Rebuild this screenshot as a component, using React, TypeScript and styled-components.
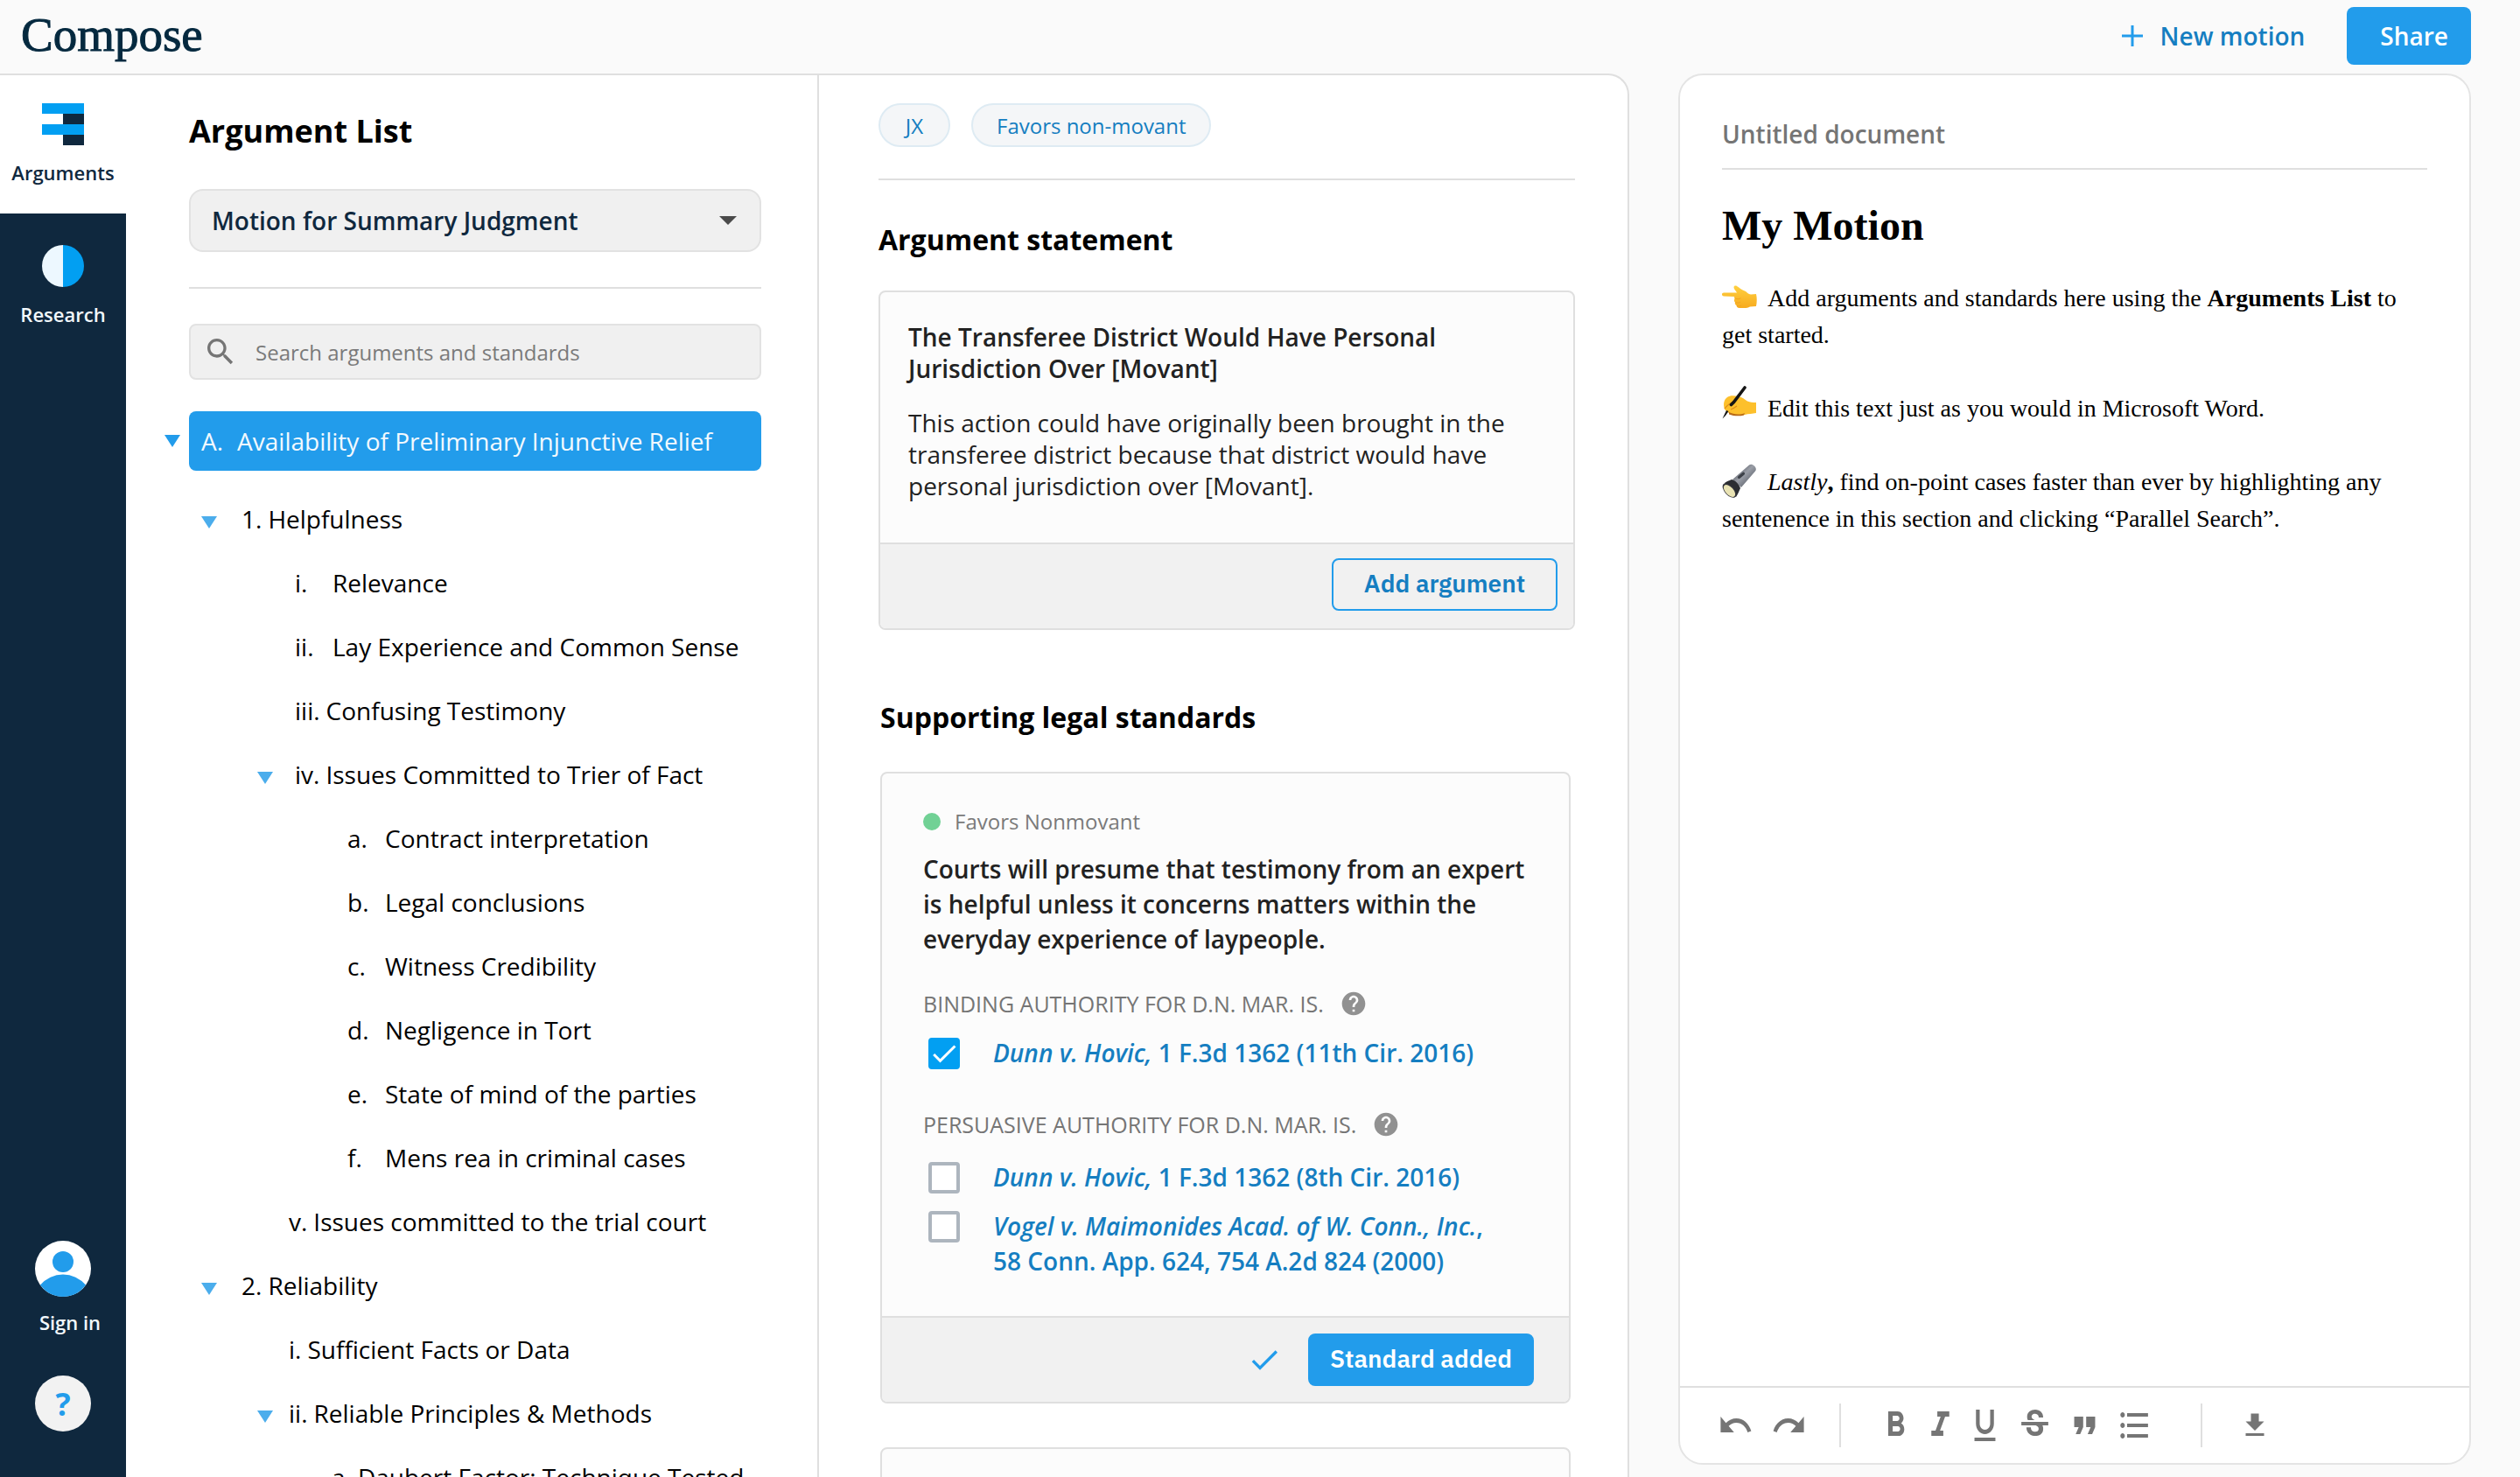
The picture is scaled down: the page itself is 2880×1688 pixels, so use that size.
import React from "react";
import styled, { createGlobalStyle } from "styled-components";

const c = {
  navy: "#0f283e",
  blue: "#229ceb",
  bright: "#029ff2",
  link: "#157ec1",
  line: "#dfdfdf",
  soft: "#f0f0f0",
  card: "#fcfcfc",
  page: "#fafafa",
  grey: "#757575",
  text: "#222222",
};

const Global = createGlobalStyle`
  * { box-sizing: border-box; }
  html, body { margin: 0; padding: 0; }
  body { font-family: "Open Sans", "Noto Sans", sans-serif; background: ${c.page}; color: #000; }
  h1, h2, h3, p, ul { margin: 0; padding: 0; }
  ul { list-style: none; }
  button, input, select { font-family: inherit; }
  button { border: 0; background: none; padding: 0; margin: 0; cursor: pointer; color: inherit; }
  a { color: inherit; text-decoration: none; }
  svg { display: block; flex: none; }
`;

const Shell = styled.div`
  display: flex;
  flex-direction: column;
  height: 100vh;
  overflow: hidden;
`;

const Header = styled.header`
  display: flex;
  justify-content: space-between;
  align-items: flex-start;
  flex: none;
  height: 84px;
  padding: 0 56px 0 24px;
`;

const Logo = styled.a`
  font-family: "Liberation Serif", serif;
  font-size: 55px;
  line-height: 80px;
  color: #05293f;
  -webkit-text-stroke: 1px #05293f;
`;

const Actions = styled.div`
  display: flex;
  align-items: center;
  gap: 48px;
  padding-top: 8px;
`;

const NewMotion = styled.button`
  display: flex;
  align-items: center;
  gap: 20px;
  font-size: 28px;
  font-weight: 600;
  color: ${c.link};
`;

const Share = styled.button`
  height: 66px;
  padding: 0 26px 0 38px;
  border-radius: 8px;
  background: ${c.blue};
  color: #fff;
  font-size: 28px;
  font-weight: 600;
`;

const Main = styled.div`
  display: grid;
  grid-template-columns: minmax(0, 1862fr) minmax(0, 906fr);
  grid-template-rows: minmax(0, 1fr);
  flex: 1;
  min-height: 0;
  gap: 56px;
  padding-right: 56px;
`;

const Workspace = styled.div`
  display: grid;
  grid-template-columns: 144px minmax(0, 792fr) minmax(0, 924fr);
  background: #fff;
  border: solid ${c.line};
  border-width: 2px 2px 0 0;
  border-radius: 0 24px 0 0;
  overflow: hidden;
`;

const Rail = styled.nav`
  display: flex;
  flex-direction: column;
  background: ${c.navy};
  color: #f2f8fc;
  padding-bottom: 52px;
`;

const RailItem = styled.button<{ $active?: boolean }>`
  display: flex;
  flex-direction: column;
  align-items: center;
  gap: 16px;
  padding: 32px 0;
  margin-bottom: 4px;
  font-size: 22px;
  line-height: 30px;
  font-weight: 600;
  height: 158px;
  background: ${(p) => (p.$active ? "#fff" : "transparent")};
  color: ${(p) => (p.$active ? c.navy : "#f2f8fc")};
`;

const RailFoot = styled.div`
  display: flex;
  flex-direction: column;
  align-items: center;
  gap: 46px;
  margin-top: auto;
`;

const SignIn = styled.button`
  display: flex;
  flex-direction: column;
  align-items: center;
  gap: 14px;
  font-size: 22px;
  line-height: 30px;
  font-weight: 600;
`;

const SignInText = styled.span`
  padding-left: 16px;
`;

const Help = styled.button`
  width: 64px;
  height: 64px;
  border-radius: 50%;
  background: #f2f2f2;
  color: ${c.blue};
  font-size: 36px;
  font-weight: 700;
`;

const ListPane = styled.section`
  padding: 38px 64px 0 72px;
  border-right: 2px solid ${c.line};
  overflow-y: auto;
  scrollbar-width: none;
`;

const PaneTitle = styled.h1`
  font-size: 36px;
  line-height: 52px;
  font-weight: 700;
`;

const SelectWrap = styled.div`
  display: grid;
  align-items: center;
  margin-top: 40px;
  > * { grid-area: 1 / 1; }
  > svg { justify-self: end; margin-right: 28px; pointer-events: none; }
`;

const MotionSelect = styled.select`
  appearance: none;
  width: 100%;
  height: 72px;
  padding: 0 60px 0 24px;
  border: 2px solid #e2e2e2;
  border-radius: 16px;
  background: ${c.soft};
  color: ${c.navy};
  font-size: 28px;
  font-weight: 600;
`;

const Rule = styled.hr<{ $top: number }>`
  border: 0;
  height: 2px;
  margin: ${(p) => p.$top}px 0 0;
  background: ${c.line};
`;

const Search = styled.label`
  display: flex;
  align-items: center;
  gap: 20px;
  height: 64px;
  margin-top: 40px;
  padding: 0 14px;
  border: 2px solid #e2e2e2;
  border-radius: 8px;
  background: ${c.soft};
  color: ${c.grey};
`;

const SearchInput = styled.input`
  flex: 1;
  min-width: 0;
  border: 0;
  padding: 0;
  outline: 0;
  background: none;
  font-size: 24px;
  &::placeholder { color: #7a7a7a; opacity: 1; }
`;

const Tree = styled.ul`
  margin: 36px 0 0 -28px;
`;

const RootRow = styled.li`
  display: flex;
  align-items: center;
  gap: 10px;
  margin-bottom: 18px;
`;

const RootButton = styled.button`
  display: flex;
  flex: 1;
  align-items: center;
  gap: 16px;
  height: 68px;
  padding: 0 14px;
  border-radius: 8px;
  background: ${c.blue};
  color: #f2f9fe;
  font-size: 28px;
  line-height: 38px;
`;

const Row = styled.li<{ $indent: number }>`
  display: flex;
  align-items: center;
  height: 73px;
  padding-left: ${(p) => p.$indent}px;
  white-space: nowrap;
`;

const Toggle = styled.button<{ $slot: number }>`
  width: ${(p) => p.$slot}px;
  padding-top: 8px;
`;

const RowLink = styled.a`
  display: flex;
  gap: 7px;
  font-size: 28px;
  line-height: 38px;
`;

const Num = styled.span<{ $wide?: boolean }>`
  min-width: ${(p) => (p.$wide ? 36 : 0)}px;
`;

const Detail = styled.section`
  padding: 32px 60px 0 68px;
  overflow-y: auto;
  scrollbar-width: none;
`;

const Pills = styled.div`
  display: flex;
  gap: 24px;
`;

const Pill = styled.button`
  min-width: 82px;
  height: 50px;
  padding: 0 27px;
  border: 2px solid #deebf3;
  border-radius: 25px;
  background: #f4f6f8;
  color: ${c.link};
  font-size: 24px;
`;

const SectionTitle = styled.h2<{ $top: number; $left?: number }>`
  margin-top: ${(p) => p.$top}px;
  padding-left: ${(p) => p.$left ?? 0}px;
  font-size: 32px;
  line-height: 44px;
  font-weight: 700;
`;

const Card = styled.article`
  margin-top: 36px;
  border: 2px solid ${c.line};
  border-radius: 8px;
  background: ${c.card};
  color: ${c.text};
  overflow: hidden;
`;

const StandardCard = styled(Card)<{ $top: number }>`
  margin: ${(p) => p.$top}px 5px 0 2px;
`;

const StatementBody = styled.div`
  padding: 33px 32px 47px;
  font-size: 28px;
  line-height: 36px;
`;

const StatementTitle = styled.h3`
  margin-bottom: 26px;
  font-size: 28px;
  font-weight: 600;
`;

const CardFoot = styled.footer<{ $pad: string }>`
  display: flex;
  justify-content: flex-end;
  align-items: center;
  gap: 30px;
  padding: ${(p) => p.$pad};
  border-top: 2px solid ${c.line};
  background: #f1f1f1;
`;

const CardButton = styled.button<{ $solid?: boolean }>`
  width: 258px;
  height: 60px;
  padding-bottom: 4px;
  border: 2px solid ${c.blue};
  border-radius: 8px;
  background: ${(p) => (p.$solid ? c.blue : "transparent")};
  color: ${(p) => (p.$solid ? "#fff" : c.link)};
  font-family: "IBM Plex Sans", Roboto, sans-serif;
  font-size: 28px;
  font-weight: 600;
`;

const StandardBody = styled.div`
  padding: 38px 48px 43px 47px;
  min-height: 200px;
`;

const Favors = styled.p`
  display: flex;
  align-items: center;
  gap: 16px;
  font-size: 24px;
  line-height: 34px;
  color: #7a7a7a;
`;

const Dot = styled.span`
  width: 20px;
  height: 20px;
  border-radius: 50%;
  background: #71d195;
`;

const StandardTitle = styled.h3`
  margin-top: 17px;
  font-size: 28px;
  line-height: 40px;
  font-weight: 600;
`;

const AuthorityLabel = styled.h4<{ $top: number }>`
  display: flex;
  align-items: center;
  gap: 18px;
  margin: ${(p) => p.$top}px 0 0;
  font-size: 25px;
  line-height: 34px;
  font-weight: 400;
  color: ${c.grey};
`;

const HelpIcon = styled.button`
  color: #919191;
`;

const Cite = styled.div<{ $top: number }>`
  display: flex;
  gap: 38px;
  margin: ${(p) => p.$top}px 0 0;
  padding: 0 24px 0 6px;
`;

const Box = styled.span`
  display: grid;
  place-items: center;
  flex: none;
  width: 36px;
  height: 36px;
  margin-top: 3px;
  > * { grid-area: 1 / 1; }
  > svg { pointer-events: none; }
`;

const Check = styled.input`
  appearance: none;
  width: 36px;
  height: 36px;
  margin: 0;
  border: 4px solid #adb5be;
  border-radius: 4px;
  background: #fff;
  &:checked { background: ${c.bright}; border-color: ${c.bright}; }
`;

const CiteText = styled.label`
  font-size: 28px;
  line-height: 40px;
  font-weight: 600;
  color: ${c.link};
`;

const Doc = styled.section`
  display: flex;
  flex-direction: column;
  margin-bottom: 14px;
  border: 2px solid #e4e4e4;
  border-radius: 28px;
  background: #fff;
`;

const DocBody = styled.div`
  flex: 1;
  min-height: 0;
  padding: 47px 48px 0;
  overflow: hidden;
`;

const DocName = styled.input`
  display: block;
  width: 100%;
  height: 40px;
  padding: 0;
  border: 0;
  outline: 0;
  font-size: 28px;
  font-weight: 600;
  color: ${c.grey};
`;

const Paper = styled.article`
  display: flex;
  flex-direction: column;
  gap: 42px;
  padding-top: 34px;
  font-family: "Liberation Serif", serif;
  font-size: 28px;
  line-height: 42px;
`;

const PaperTitle = styled.h1`
  margin-top: 36px;
  font-family: "Liberation Serif", serif;
  font-size: 48px;
  line-height: 56px;
`;

const Emoji = styled.svg<{ $lift?: number }>`
  display: inline-block;
  width: 40px;
  height: 40px;
  margin: -10px 12px -10px 0;
  vertical-align: ${(p) => p.$lift ?? 0}px;
`;

const Toolbar = styled.div`
  display: flex;
  align-items: center;
  flex: none;
  height: 88px;
  padding: 0 43px;
  border-top: 2px solid ${c.line};
  color: ${c.grey};
`;

const Group = styled.div<{ $gap: number }>`
  display: flex;
  align-items: center;
  gap: ${(p) => p.$gap}px;
`;

const Split = styled.span<{ $before: number }>`
  width: 2px;
  height: 50px;
  margin: 0 42px 0 ${(p) => p.$before}px;
  background: ${c.line};
`;

const Tool = ({ d, label, w = 41, h = 48 }: { d: string; label: string; w?: number; h?: number }) => (
  <button aria-label={label}>
    <svg width={w} height={h} viewBox="0 0 24 24" preserveAspectRatio="none" fill="currentColor">
      <path d={d} />
    </svg>
  </button>
);

const Triangle = ({ color, w = 18, h = 14 }: { color: string; w?: number; h?: number }) => (
  <svg width={w} height={h} viewBox="0 0 18 14" preserveAspectRatio="none">
    <path d="M0 0h18L9 14z" fill={color} />
  </svg>
);

const CheckMark = ({ color, size }: { color: string; size: number }) => (
  <svg width={size} height={size} viewBox="0 0 24 24" fill={color}>
    <path d="M9 16.17 4.83 12l-1.42 1.41L9 19 21 7l-1.41-1.41z" />
  </svg>
);

type Item = { num: string; label: string; indent: number; slot: number; open?: boolean; wide?: boolean };

const items: Item[] = [
  { num: "1.", label: "Helpfulness", indent: 42, slot: 46, open: true },
  { num: "i.", label: "Relevance", indent: 106, slot: 43, wide: true },
  { num: "ii.", label: "Lay Experience and Common Sense", indent: 106, slot: 43, wide: true },
  { num: "iii.", label: "Confusing Testimony", indent: 106, slot: 43 },
  { num: "iv.", label: "Issues Committed to Trier of Fact", indent: 106, slot: 43, open: true },
  { num: "a.", label: "Contract interpretation", indent: 166, slot: 43, wide: true },
  { num: "b.", label: "Legal conclusions", indent: 166, slot: 43, wide: true },
  { num: "c.", label: "Witness Credibility", indent: 166, slot: 43, wide: true },
  { num: "d.", label: "Negligence in Tort", indent: 166, slot: 43, wide: true },
  { num: "e.", label: "State of mind of the parties", indent: 166, slot: 43, wide: true },
  { num: "f.", label: "Mens rea in criminal cases", indent: 166, slot: 43, wide: true },
  { num: "v.", label: "Issues committed to the trial court", indent: 106, slot: 36 },
  { num: "2.", label: "Reliability", indent: 42, slot: 46, open: true },
  { num: "i.", label: "Sufficient Facts or Data", indent: 106, slot: 36 },
  { num: "ii.", label: "Reliable Principles & Methods", indent: 106, slot: 36, open: true },
  { num: "a.", label: "Daubert Factor: Technique Tested", indent: 148, slot: 43 },
];

const TreeRow = ({ item }: { item: Item }) => (
  <Row $indent={item.open ? item.indent : item.indent + item.slot}>
    {item.open && (
      <Toggle $slot={item.slot} aria-label={`Collapse ${item.label}`}>
        <Triangle color="#4badec" />
      </Toggle>
    )}
    <RowLink href="#">
      <Num $wide={item.wide}>{item.num}</Num>
      <span>{item.label}</span>
    </RowLink>
  </Row>
);

const HelpBadge = ({ label }: { label: string }) => (
  <HelpIcon aria-label={label}>
    <svg width="32" height="32" viewBox="0 0 24 24" fill="currentColor">
      <path d="M12 2C6.48 2 2 6.48 2 12s4.48 10 10 10 10-4.48 10-10S17.52 2 12 2zm1 17h-2v-2h2v2zm2.07-7.75-.9.92C13.45 12.9 13 13.5 13 15h-2v-.5c0-1.1.45-2.1 1.17-2.83l1.24-1.26c.37-.36.59-.86.59-1.41 0-1.1-.9-2-2-2s-2 .9-2 2H8c0-2.21 1.79-4 4-4s4 1.79 4 4c0 .88-.36 1.68-.93 2.25z" />
    </svg>
  </HelpIcon>
);

const Citation = ({ id, top, checked, children }: { id: string; top: number; checked?: boolean; children: React.ReactNode }) => (
  <Cite $top={top}>
    <Box>
      <Check type="checkbox" id={id} defaultChecked={checked} />
      {checked && <CheckMark color="#fff" size={36} />}
    </Box>
    <CiteText htmlFor={id}>{children}</CiteText>
  </Cite>
);

const PointingHand = () => (
  <Emoji viewBox="0 0 40 40" role="img" aria-label="Pointing left">
    <defs>
      <linearGradient id="hand" x1="0" y1="0" x2="0" y2="1">
        <stop offset="0" stopColor="#ffd040" />
        <stop offset="1" stopColor="#f7ab1f" />
      </linearGradient>
    </defs>
    <path d="M2 14.500h15c-1-2-3.500-4-3.500-6 0-2 2-2.500 3.500-1.500 3 2 6 4.500 9 5.500 2.500 1 4 4 7 4l6-.5c1 4 1 9 0 14l-7 .5c-2 1-4 1.500-7 1.500h-5c-2.500 0-3.500-1.500-3.500-3-1.500-.8-2-2-1.500-3.500-1.300-1-1.500-2.500-.5-4l-.5-2.500-12-.5c-2.800-.3-2.600-4 0-4z" fill="url(#hand)" />
    <path d="M15 21c2 1 4.500 1 6 0M15.500 25.500c2 .8 3.500.7 5 0M17.500 29.500c1.500.5 2.500.4 4-.2" stroke="#f0a420" strokeWidth="1" fill="none" strokeLinecap="round" />
  </Emoji>
);

const WritingHand = () => (
  <Emoji $lift={5} viewBox="0 0 40 40" role="img" aria-label="Writing hand">
    <path d="M3 27c-2-6-1-11 3-14 3-2.500 8-2 13-1 4 .8 7 3.500 10 5.500 3 1.500 6 1.500 10 1.500v12c-4 1-9 .8-13 2-5 1-12 .8-17-1z" fill="#fdc02c" />
    <path d="M8 30c5 3 13 3 18 1.200l-1 2.300c-5 1.500-12 1-17-1z" fill="#b86a18" />
    <path d="M3 26c4-6 9-7 13-10M17 23c-2 1.500-4 3-7 4" stroke="#e08c17" strokeWidth="1.200" fill="none" />
    <path d="M26 2 13.500 18.500l-3 3" stroke="#151515" strokeWidth="3.600" fill="none" strokeLinecap="round" />
    <path d="M5 28 .5 37.500 4 34l3.500-5z" fill="#151515" />
  </Emoji>
);

const Flashlight = () => (
  <Emoji viewBox="0 0 40 40" role="img" aria-label="Flashlight">
    <defs>
      <linearGradient id="tube" x1=".2" y1=".2" x2=".8" y2=".8">
        <stop offset="0" stopColor="#5c6068" />
        <stop offset=".45" stopColor="#9a9ea7" />
        <stop offset="1" stopColor="#5f646d" />
      </linearGradient>
    </defs>
    <path d="M12 18 31 1.500c1.500-1.500 4-1 6 1s2.500 4.500 1 6L22 27z" fill="url(#tube)" />
    <path d="M3 22c2.500-2 5-2.500 8-4 4 1 8.500 5 10 10-1.500 3-2.500 6-5 10C12 35 5 28 3 22z" fill="#2b2d32" />
    <path d="M19.500 15.500l5-4.200" stroke="#3d4148" strokeWidth="3.200" strokeLinecap="round" />
    <ellipse cx="8.500" cy="30.500" rx="5.500" ry="10" transform="rotate(-42 8.500 30.500)" fill="#33343a" />
    <ellipse cx="8.500" cy="31" rx="4.500" ry="8.500" transform="rotate(-42 8.500 31)" fill="#e9e3b4" />
  </Emoji>
);

export default function App() {
  return (
    <Shell>
      <Global />
      <Header>
        <Logo href="#">Compose</Logo>
        <Actions>
          <NewMotion>
            <svg width="24" height="24" viewBox="0 0 24 24">
              <path d="M12 0v24M0 12h24" stroke={c.blue} strokeWidth="3" />
            </svg>
            New motion
          </NewMotion>
          <Share>Share</Share>
        </Actions>
      </Header>
      <Main>
        <Workspace>
          <Rail>
            <RailItem $active>
              <svg width="48" height="48" viewBox="0 0 48 48">
                <path d="M0 0h48v12H0zM0 24h48v12H0z" fill={c.bright} />
                <path d="M24 12h24v12H24zM24 36h24v12H24z" fill={c.navy} />
              </svg>
              Arguments
            </RailItem>
            <RailItem>
              <svg width="48" height="48" viewBox="0 0 48 48">
                <path d="M24 0a24 24 0 0 0 0 48z" fill="#edf8ff" />
                <path d="M24 0a24 24 0 0 1 0 48z" fill={c.bright} />
              </svg>
              Research
            </RailItem>
            <RailFoot>
              <SignIn>
                <svg width="64" height="64" viewBox="0 0 64 64">
                  <circle cx="32" cy="32" r="32" fill="#fff" />
                  <circle cx="32" cy="24" r="12" fill={c.blue} />
                  <path d="M6 50.600a34 34 0 0 1 52 0A32 32 0 0 1 6 50.600z" fill={c.blue} />
                </svg>
                <SignInText>Sign in</SignInText>
              </SignIn>
              <Help aria-label="Help">?</Help>
            </RailFoot>
          </Rail>

          <ListPane>
            <PaneTitle>Argument List</PaneTitle>
            <SelectWrap>
              <MotionSelect aria-label="Motion type">
                <option>Motion for Summary Judgment</option>
              </MotionSelect>
              <Triangle color="#4a4a4a" w={20} h={10} />
            </SelectWrap>
            <Rule $top={40} />
            <Search>
              <svg width="40" height="40" viewBox="0 0 24 24" fill="currentColor">
                <path d="M15.500 14h-.79l-.28-.27C15.410 12.590 16 11.110 16 9.500 16 5.910 13.090 3 9.500 3S3 5.910 3 9.500 5.910 16 9.500 16c1.610 0 3.090-.59 4.230-1.570l.27.28v.79l5 4.990L20.490 19l-4.990-5zm-6 0C7.010 14 5 11.990 5 9.500S7.010 5 9.500 5 14 7.010 14 9.500 11.990 14 9.500 14z" />
              </svg>
              <SearchInput type="search" aria-label="Search arguments and standards" placeholder="Search arguments and standards" />
            </Search>
            <Tree>
              <RootRow>
                <button aria-label="Collapse Availability of Preliminary Injunctive Relief">
                  <Triangle color={c.blue} />
                </button>
                <RootButton>
                  <span>A.</span>
                  <span>Availability of Preliminary Injunctive Relief</span>
                </RootButton>
              </RootRow>
              {items.map((item) => (
                <TreeRow key={item.num + item.label} item={item} />
              ))}
            </Tree>
          </ListPane>

          <Detail>
            <Pills>
              <Pill>JX</Pill>
              <Pill>Favors non-movant</Pill>
            </Pills>
            <Rule $top={36} />
            <SectionTitle $top={46}>Argument statement</SectionTitle>
            <Card>
              <StatementBody>
                <StatementTitle>The Transferee District Would Have Personal Jurisdiction Over [Movant]</StatementTitle>
                <p>
                  This action could have originally been brought in the transferee district because that district would
                  have personal jurisdiction over [Movant].
                </p>
              </StatementBody>
              <CardFoot $pad="16px 18px 20px">
                <CardButton>Add argument</CardButton>
              </CardFoot>
            </Card>

            <SectionTitle $top={78} $left={2}>Supporting legal standards</SectionTitle>
            <StandardCard $top={40}>
              <StandardBody>
                <Favors>
                  <Dot />
                  Favors Nonmovant
                </Favors>
                <StandardTitle>
                  Courts will presume that testimony from an expert is helpful unless it concerns matters within the
                  everyday experience of laypeople.
                </StandardTitle>
                <AuthorityLabel $top={37}>
                  BINDING AUTHORITY FOR D.N. MAR. IS.
                  <HelpBadge label="About binding authority" />
                </AuthorityLabel>
                <Citation id="dunn-11" top={19} checked>
                  <em>Dunn v. Hovic,</em> 1 F.3d 1362 (11th Cir. 2016)
                </Citation>
                <AuthorityLabel $top={45}>
                  PERSUASIVE AUTHORITY FOR D.N. MAR. IS.
                  <HelpBadge label="About persuasive authority" />
                </AuthorityLabel>
                <Citation id="dunn-8" top={23}>
                  <em>Dunn v. Hovic,</em> 1 F.3d 1362 (8th Cir. 2016)
                </Citation>
                <Citation id="vogel" top={16}>
                  <em>Vogel v. Maimonides Acad. of W. Conn., Inc.</em>, 58 Conn. App. 624, 754 A.2d 824 (2000)
                </Citation>
              </StandardBody>
              <CardFoot $pad="18px 40px">
                <CheckMark color={c.blue} size={40} />
                <CardButton $solid>Standard added</CardButton>
              </CardFoot>
            </StandardCard>
            <StandardCard $top={50}>
              <StandardBody />
            </StandardCard>
          </Detail>
        </Workspace>

        <Doc>
          <DocBody>
            <DocName aria-label="Document name" defaultValue="Untitled document" />
            <Rule $top={19} />
            <PaperTitle>My Motion</PaperTitle>
            <Paper>
              <p>
                <PointingHand />
                Add arguments and standards here using the <b>Arguments List</b> to get started.
              </p>
              <p>
                <WritingHand />
                Edit this text just as you would in Microsoft Word.
              </p>
              <p>
                <Flashlight />
                <em>Lastly</em>
                <b>,</b> find on-point cases faster than ever by highlighting any sentenence in this section and
                clicking “Parallel Search”.
              </p>
            </Paper>
          </DocBody>
          <Toolbar>
            <Group $gap={20}>
              <Tool label="Undo" d="M12.500 8c-2.650 0-5.050.99-6.900 2.600L2 7v9h9l-3.620-3.620c1.390-1.160 3.160-1.880 5.120-1.880 3.540 0 6.550 2.310 7.600 5.500l2.370-.78C21.080 11.030 17.150 8 12.500 8z" />
              <Tool label="Redo" d="M18.400 10.600C16.550 8.990 14.150 8 11.500 8c-4.650 0-8.580 3.030-9.960 7.220L3.900 16c1.050-3.190 4.050-5.500 7.600-5.500 1.950 0 3.730.72 5.120 1.880L13 16h9V7l-3.600 3.600z" />
            </Group>
            <Split $before={37} />
            <Group $gap={16}>
              <Group $gap={10}>
                <Tool label="Bold" d="M15.600 10.790c.97-.67 1.650-1.770 1.650-2.790 0-2.260-1.750-4-4-4H7v14h7.040c2.090 0 3.710-1.700 3.710-3.790 0-1.520-.86-2.820-2.150-3.420zM10 6.500h3c.83 0 1.500.67 1.500 1.500s-.67 1.500-1.500 1.500h-3v-3zm3.500 9H10v-3h3.500c.83 0 1.500.67 1.500 1.500s-.67 1.500-1.500 1.500z" />
                <Tool label="Italic" d="M10 4v3h2.210l-3.420 8H6v3h8v-3h-2.210l3.420-8H18V4z" />
                <Tool label="Underline" d="M12 17c3.310 0 6-2.690 6-6V3h-2.500v8c0 1.930-1.570 3.500-3.500 3.500S8.500 12.930 8.500 11V3H6v8c0 3.310 2.690 6 6 6zm-7 2v2h14v-2H5z" />
              </Group>
              <Tool label="Strikethrough" d="M6.850 7.080C6.850 4.370 9.450 3 12.240 3c1.640 0 3 .49 3.900 1.280.77.65 1.460 1.730 1.460 3.240h-3.010c0-.31-.05-.59-.15-.85-.29-.86-1.200-1.280-2.250-1.280-1.860 0-2.340 1.020-2.340 1.700 0 .48.25.88.74 1.210.38.25.77.48 1.410.7H7.390c-.21-.34-.54-.89-.54-1.920zM21 12v-2H3v2h9.620c1.150.45 1.960.75 1.960 1.970 0 1-.81 1.670-2.280 1.670-1.540 0-2.930-.54-2.930-2.510H6.400c0 .55.08 1.130.24 1.580.81 2.290 3.290 3.300 5.670 3.300 2.270 0 5.300-.89 5.300-4.050 0-.3-.01-1.160-.48-1.940H21V12z" />
              <Tool label="Quote" d="M6 17h3l2-4V7H5v6h3zm8 0h3l2-4V7h-6v6h3z" />
              <Tool label="Bulleted list" d="M4 10.500c-.83 0-1.500.67-1.500 1.500s.67 1.500 1.500 1.500 1.500-.67 1.500-1.500-.67-1.500-1.500-1.500zm0-6c-.83 0-1.500.67-1.500 1.500S3.170 7.500 4 7.500 5.500 6.830 5.500 6 4.830 4.500 4 4.500zm0 12c-.83 0-1.500.68-1.500 1.500s.68 1.500 1.500 1.500 1.500-.68 1.500-1.500-.67-1.500-1.500-1.500zM7 19h14v-2H7v2zm0-6h14v-2H7v2zm0-8v2h14V5H7z" />
            </Group>
            <Split $before={55} />
            <Tool label="Download" w={36} h={36} d="M19 9h-4V3H9v6H5l7 7 7-7zM5 18v2h14v-2H5z" />
          </Toolbar>
        </Doc>
      </Main>
    </Shell>
  );
}
